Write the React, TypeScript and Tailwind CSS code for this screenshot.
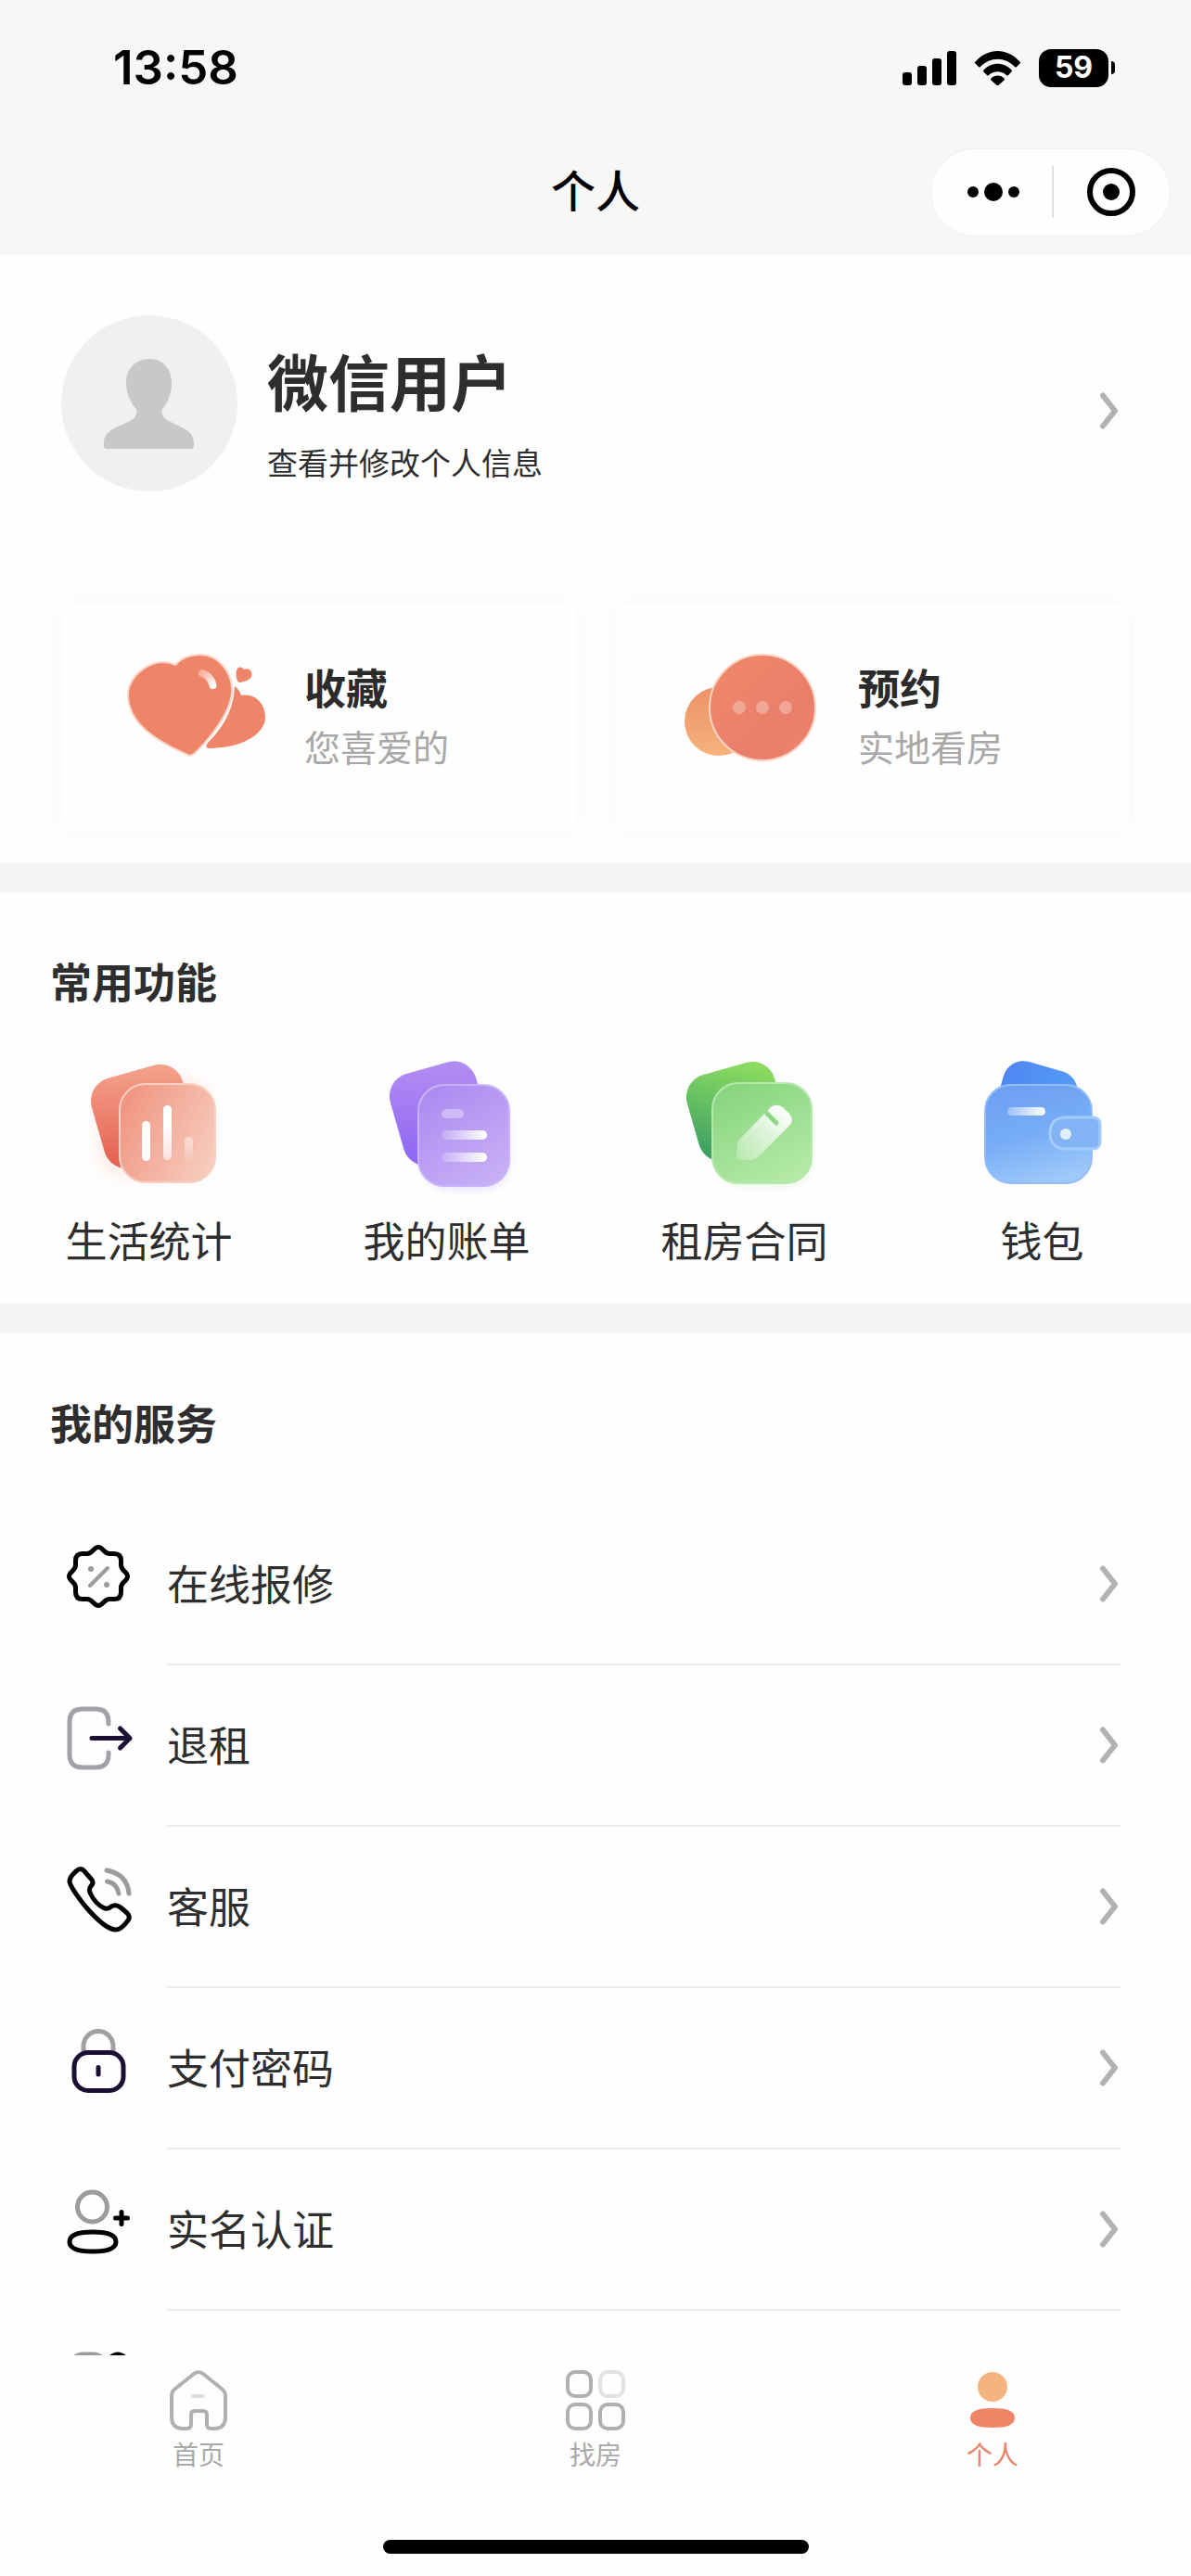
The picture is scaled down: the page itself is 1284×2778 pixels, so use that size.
import type { ReactNode } from 'react'

function Chevron() {
  return (
    <svg viewBox="0 0 22 40" className="h-10 w-[22px] shrink-0" fill="none" stroke="#b2b2b2"
      strokeWidth="6" strokeLinecap="round" strokeLinejoin="round" aria-hidden="true">
      <path d="M3 3.500L16 20L3 36.500" />
    </svg>
  )
}

function StatusBar() {
  return (
    <div className="flex h-[146px] items-center justify-between pl-[122px] pr-[82px] text-black">
      <span className="text-[51px] leading-[60px] font-semibold">13:58</span>
      <div className="flex items-center gap-[19px]">
        <svg viewBox="0 0 58 38" className="h-[38px] w-[58px]" aria-hidden="true">
          <rect x="0" y="24" width="10" height="14" rx="3" />
          <rect x="16" y="17" width="10" height="21" rx="3" />
          <rect x="32" y="9" width="10" height="29" rx="3" />
          <rect x="48" y="1" width="10" height="37" rx="3" />
        </svg>
        <svg viewBox="0 0 51 38" className="h-[38px] w-[51px]" aria-hidden="true">
          <path d="M1.500 12.500C15 -3 36 -3 49.500 12.500Q50.500 13.500 49.500 14.500L46 18Q45 19 44 18C33.500 7 17.500 7 7 18Q6 19 5 18L1.500 14.500Q.5 13.500 1.500 12.500Z" />
          <path d="M10.500 21.500C18.500 12.500 32.500 12.500 40.500 21.500Q41.500 22.500 40.500 23.500L37 27Q36 28 35 27C29.500 22 21.500 22 16 27Q15 28 14 27L10.500 23.500Q9.500 22.500 10.500 21.500Z" />
          <path d="M18.500 30.500C22 26.500 29 26.500 32.500 30.500Q33.500 31.500 32.500 32.500L26.500 38Q25.500 39 24.500 38L18.500 32.500Q17.500 31.500 18.500 30.500Z" />
        </svg>
        <div className="flex items-center gap-[3px]">
          <span className="flex h-[41px] w-[75px] items-center justify-center rounded-[13px] bg-black text-[32px] leading-[40px] font-bold text-white">
            59
          </span>
          <span className="h-[14px] w-1 rounded-r-full bg-black" />
        </div>
      </div>
    </div>
  )
}

function NavBar() {
  return (
    <div className="grid h-[122px] grid-cols-3 items-center">
      <h1 className="col-start-2 text-center text-[48px] leading-[64px] font-medium text-black">个人</h1>
      <div className="mr-[22px] flex h-[95px] w-[259px] items-center justify-self-end rounded-full border border-[#f0f0f0] bg-[#fefefe]">
        <button type="button" aria-label="更多" className="flex h-full flex-1 items-center justify-center pl-1">
          <svg viewBox="0 0 58 22" className="h-[22px] w-[58px]" aria-hidden="true">
            <circle cx="7" cy="11" r="6" />
            <circle cx="29" cy="11" r="10" />
            <circle cx="51" cy="11" r="6" />
          </svg>
        </button>
        <span className="h-14 w-0.5 bg-[#dedede]" />
        <button type="button" aria-label="关闭" className="flex h-full flex-1 items-center justify-center">
          <svg viewBox="0 0 52 52" className="h-[52px] w-[52px]" aria-hidden="true">
            <circle cx="26" cy="26" r="23" fill="none" stroke="#000" strokeWidth="6" />
            <circle cx="26" cy="26" r="9" />
          </svg>
        </button>
      </div>
    </div>
  )
}

function HeartIcon() {
  return (
    <svg viewBox="0 0 160 130" className="h-[130px] w-40 shrink-0" aria-hidden="true">
      <defs>
        <linearGradient id="shine" x1="0" y1="0" x2="1" y2="1">
          <stop offset="0" stopColor="#fbd3c4" stopOpacity=".6" />
          <stop offset="1" stopColor="#fff" />
        </linearGradient>
      </defs>
      <path d="M121 40Q126 43 128 50C142 47 154 58 154 74C153 94 125 107 94 107Q88 107 92 101C108 85 120 66 121 40Z" fill="#ee8468" />
      <path d="M57 17C48 13 38 13 28 18C13 26 5 39 6 52C8 80 34 98 70 114Q74 116 77 113C90 101 117 70 118 46C119 26 104 6 84 6C72 6 63 10 57 17Z"
        fill="#ee8468" stroke="#fbd5c6" strokeWidth="2" />
      <path d="M131 22C135 20 140 23 139.500 28C139 33 132 35 127 36Q124 36 123.500 33C122 27 122 21 126 19.500Q130 19 131 22Z" fill="#ee8468" />
      <path d="M86 26Q95 29 97.500 39" fill="none" stroke="url(#shine)" strokeWidth="8" strokeLinecap="round" />
    </svg>
  )
}

function ChatIcon() {
  return (
    <svg viewBox="0 0 160 130" className="h-[130px] w-40 shrink-0" aria-hidden="true">
      <defs>
        <linearGradient id="chatBack" x1="0" y1="0" x2="0" y2="1">
          <stop offset="0" stopColor="#ec9266" />
          <stop offset="1" stopColor="#f6b27c" />
        </linearGradient>
        <linearGradient id="chatFront" x1="0" y1="0" x2="1" y2="1">
          <stop offset="0" stopColor="#ef8969" />
          <stop offset=".7" stopColor="#e97e6b" />
          <stop offset="1" stopColor="#f08469" />
        </linearGradient>
      </defs>
      <circle cx="46" cy="78" r="37" fill="url(#chatBack)" />
      <circle cx="93" cy="63" r="57" fill="url(#chatFront)" stroke="#fbd5c6" strokeWidth="2" />
      <g fill="#fff" fillOpacity=".3">
        <circle cx="68" cy="63" r="7" />
        <circle cx="93" cy="63" r="7" />
        <circle cx="118" cy="63" r="7" />
      </g>
    </svg>
  )
}

function StatsIcon() {
  return (
    <svg viewBox="0 0 154 154" className="h-[154px] w-[154px]" aria-hidden="true">
      <defs>
        <linearGradient id="statsBack" x1=".6" y1="0" x2=".3" y2="1">
          <stop offset="0" stopColor="#f3a08a" />
          <stop offset="1" stopColor="#e5604f" />
        </linearGradient>
        <linearGradient id="statsFront" x1="0" y1=".2" x2="1" y2=".7">
          <stop offset="0" stopColor="#f09480" />
          <stop offset="1" stopColor="#f7cbbd" />
        </linearGradient>
        <linearGradient id="statsBar" x1="0" y1="0" x2="0" y2="1">
          <stop offset=".4" stopColor="#fff" />
          <stop offset="1" stopColor="#fff" stopOpacity=".6" />
        </linearGradient>
        <linearGradient id="statsFade" x1="0" y1="0" x2="0" y2="1">
          <stop offset="0" stopColor="#fff" stopOpacity=".5" />
          <stop offset="1" stopColor="#fff" stopOpacity=".1" />
        </linearGradient>
        <filter id="statsGlow" x="-30%" y="-30%" width="160%" height="160%">
          <feGaussianBlur stdDeviation="8" />
        </filter>
      </defs>
      <rect x="20" y="26" width="124" height="108" rx="30" fill="#fbded6" opacity=".5" filter="url(#statsGlow)" />
      <rect x="8" y="34" width="102" height="100" rx="25" transform="rotate(-16 8 34)" fill="url(#statsBack)" />
      <rect x="45" y="33" width="103" height="106" rx="28" fill="url(#statsFront)" stroke="#f9cfc3" strokeWidth="2" />
      <rect x="69" y="73" width="9" height="43" rx="4.500" fill="#fff" />
      <rect x="92" y="56" width="9" height="59" rx="4.500" fill="url(#statsBar)" />
      <rect x="115" y="90" width="9" height="26" rx="4.500" fill="url(#statsFade)" />
    </svg>
  )
}

function BillIcon() {
  return (
    <svg viewBox="0 0 154 154" className="h-[154px] w-[154px]" aria-hidden="true">
      <defs>
        <linearGradient id="billBack" x1=".6" y1="0" x2=".3" y2="1">
          <stop offset="0" stopColor="#b18cf2" />
          <stop offset="1" stopColor="#8f66f3" />
        </linearGradient>
        <linearGradient id="billFront" x1=".2" y1="0" x2=".8" y2="1">
          <stop offset="0" stopColor="#ac8bf1" />
          <stop offset="1" stopColor="#c8b0f6" />
        </linearGradient>
        <linearGradient id="billLine" x1="0" y1="0" x2="1" y2="0">
          <stop offset="0" stopColor="#fff" stopOpacity=".15" />
          <stop offset="1" stopColor="#fff" />
        </linearGradient>
        <filter id="billGlow" x="-30%" y="-30%" width="160%" height="160%">
          <feGaussianBlur stdDeviation="5" />
        </filter>
      </defs>
      <rect x="50" y="46" width="94" height="100" rx="28" fill="#c8b0f6" opacity=".4" filter="url(#billGlow)" />
      <rect x="9" y="29" width="96" height="102" rx="25" transform="rotate(-16 9 29)" fill="url(#billBack)" />
      <rect x="46" y="34" width="98" height="109" rx="28" fill="url(#billFront)" stroke="#c9b3fb" strokeWidth="2" />
      <rect x="71" y="60" width="24" height="10" rx="5" fill="#fff" fillOpacity=".35" />
      <rect x="71" y="83" width="49" height="10" rx="5" fill="url(#billLine)" />
      <rect x="71" y="107" width="49" height="10" rx="5" fill="url(#billLine)" />
    </svg>
  )
}

function ContractIcon() {
  return (
    <svg viewBox="0 0 154 154" className="h-[154px] w-[154px]" aria-hidden="true">
      <defs>
        <linearGradient id="dealBack" x1=".9" y1="0" x2=".3" y2="1">
          <stop offset="0" stopColor="#93e05f" />
          <stop offset=".5" stopColor="#68c263" />
          <stop offset="1" stopColor="#3da062" />
        </linearGradient>
        <linearGradient id="dealFront" x1=".2" y1="0" x2=".7" y2="1">
          <stop offset="0" stopColor="#88d47f" />
          <stop offset="1" stopColor="#b4eaa6" />
        </linearGradient>
        <linearGradient id="dealPen" x1=".8" y1="0" x2=".1" y2="1">
          <stop offset="0" stopColor="#fff" />
          <stop offset="1" stopColor="#fff" stopOpacity=".25" />
        </linearGradient>
        <filter id="dealGlow" x="-30%" y="-30%" width="160%" height="160%">
          <feGaussianBlur stdDeviation="5" />
        </filter>
      </defs>
      <rect x="48" y="44" width="100" height="98" rx="28" fill="#b4eaa6" opacity=".4" filter="url(#dealGlow)" />
      <rect x="8" y="30" width="98" height="96" rx="25" transform="rotate(-16 8 30)" fill="url(#dealBack)" />
      <rect x="42" y="32" width="107" height="108" rx="28" fill="url(#dealFront)" stroke="#b6e8ae" strokeWidth="2" />
      <path d="M69 98Q69 95 71 93L105 58Q112 53 119 59L125 65Q130 71 126 77L93 110Q90 114 84 115H74Q68 115 68 109Z" fill="url(#dealPen)" />
      <path d="M101 65L111 75" stroke="#8fd786" strokeWidth="5" strokeLinecap="round" />
    </svg>
  )
}

function WalletIcon() {
  return (
    <svg viewBox="0 0 154 154" className="h-[154px] w-[154px]" aria-hidden="true">
      <defs>
        <linearGradient id="payBack" x1="0" y1="0" x2="1" y2="0">
          <stop offset="0" stopColor="#4f87f2" />
          <stop offset="1" stopColor="#539df8" />
        </linearGradient>
        <linearGradient id="payFront" x1=".3" y1="0" x2=".6" y2="1">
          <stop offset="0" stopColor="#6da0f3" />
          <stop offset=".5" stopColor="#77adf6" />
          <stop offset="1" stopColor="#9fc9fa" />
        </linearGradient>
        <linearGradient id="payLine" x1="0" y1="0" x2="1" y2="0">
          <stop offset="0" stopColor="#fff" stopOpacity=".3" />
          <stop offset="1" stopColor="#fff" />
        </linearGradient>
      </defs>
      <rect x="41" y="3" width="82" height="80" rx="22" transform="rotate(16 41 3)" fill="url(#payBack)" />
      <rect x="15" y="34" width="115" height="106" rx="28" fill="url(#payFront)" stroke="#93bdfa" strokeWidth="2" />
      <rect x="39" y="58" width="41" height="9" rx="4.500" fill="url(#payLine)" />
      <path d="M101 69H131Q139 69 139 77V95Q139 103 131 103H101Q85 102 85 86Q85 70 101 69Z" fill="#82b4f5" stroke="#a5cbfb" strokeWidth="3" />
      <circle cx="102" cy="87" r="6" fill="#e3effd" />
    </svg>
  )
}

function RowIcon({ children }: { children: ReactNode }) {
  return (
    <svg viewBox="0 0 76 76" className="mb-[18px] h-[76px] w-[76px] shrink-0" fill="none" stroke="#000"
      strokeWidth="5" strokeLinecap="round" strokeLinejoin="round" aria-hidden="true">
      {children}
    </svg>
  )
}

const shortcuts = [
  { label: '生活统计', icon: <StatsIcon /> },
  { label: '我的账单', icon: <BillIcon /> },
  { label: '租房合同', icon: <ContractIcon /> },
  { label: '钱包', icon: <WalletIcon /> },
]

const services = [
  {
    label: '在线报修',
    icon: (
      <RowIcon>
        <path d="M38 6.500C43 6.500 44 13.500 50 13.500H55Q62.500 13.500 62.500 21V26C62.500 32 69.500 33 69.500 38C69.500 43 62.500 44 62.500 50V55Q62.500 62.500 55 62.500H50C44 62.500 43 69.500 38 69.500C33 69.500 32 62.500 26 62.500H21Q13.500 62.500 13.500 55V50C13.500 44 6.500 43 6.500 38C6.500 33 13.500 32 13.500 26V21Q13.500 13.500 21 13.500H26C32 13.500 33 6.500 38 6.500Z" />
        <path d="M29 48L48 29" stroke="#9b9b9b" strokeWidth="4" />
        <circle cx="30" cy="30" r="3" fill="#9b9b9b" stroke="none" />
        <circle cx="47" cy="47" r="3" fill="#9b9b9b" stroke="none" />
      </RowIcon>
    ),
  },
  {
    label: '退租',
    icon: (
      <RowIcon>
        <path d="M49 23V21Q49 7 35 7H21Q7 7 7 21V56Q7 70 21 70H35Q49 70 49 56V54" stroke="#a3a1a8" />
        <path d="M31 38.500H72M61.500 28L72 38.500L61.500 49" stroke="#1b1033" />
      </RowIcon>
    ),
  },
  {
    label: '客服',
    icon: (
      <RowIcon>
        <path d="M14 8Q19 3 23 8L30 16Q34 20 30 24Q27 28 30 33Q35 43 43 47Q48 50 52 46Q57 43 62 47L69 53Q73 57 70 61Q62 72 56 71Q45 70 25 47Q8 26 7 19Q7 14 14 8Z" />
        <path d="M47 7Q69 11 71 32M47.500 19Q58 21 60 32" stroke="#9b9b9b" />
      </RowIcon>
    ),
  },
  {
    label: '支付密码',
    icon: (
      <RowIcon>
        <path d="M22 28V22.500A16 16 0 0 1 54 22.500V28" stroke="#a0a0a0" strokeLinecap="butt" />
        <rect x="12" y="29.500" width="53" height="41" rx="15" stroke="#1b1033" />
        <path d="M38 45.500V53" stroke="#1b1033" />
      </RowIcon>
    ),
  },
  {
    label: '实名认证',
    icon: (
      <RowIcon>
        <circle cx="31.500" cy="22" r="16" stroke="#9b9b9b" />
        <path d="M32 49C48 49 57 52 57 59.500C57 67 48 70 32 70C16 70 7 67 7 59.500C7 52 16 49 32 49Z" />
        <path d="M56.500 34H69.500M63 27.500V40.500" />
      </RowIcon>
    ),
  },
  {
    label: '',
    icon: (
      <RowIcon>
        <rect x="9" y="7" width="36" height="62" rx="12" stroke="#9b9b9b" />
        <circle cx="59" cy="17" r="10" />
      </RowIcon>
    ),
  },
]

const tabs = [
  {
    label: '首页',
    active: false,
    icon: (
      <g fill="none" stroke="#b0b0b0" strokeWidth="4" strokeLinecap="round">
        <path d="M29 6Q34 2.500 39 6L59 22Q63 25 63 30V52Q63 65 51 65H47Q43 65 43 60V50Q43 46 39 46H30Q26 46 26 50V60Q26 65 22 65H17Q5 65 5 52V30Q5 25 9 22Z" />
        <path d="M28 30H39" stroke="#dcdcdc" />
      </g>
    ),
  },
  {
    label: '找房',
    active: false,
    icon: (
      <g fill="none" stroke="#b0b0b0" strokeWidth="4">
        <rect x="4" y="4" width="25" height="26" rx="8" />
        <rect x="39" y="4" width="25" height="26" rx="8" stroke="#e2e2e2" />
        <rect x="4" y="39" width="25" height="26" rx="8" />
        <rect x="39" y="39" width="25" height="26" rx="8" />
      </g>
    ),
  },
  {
    label: '个人',
    active: true,
    icon: (
      <g>
        <circle cx="34" cy="20" r="16" fill="#f4b47f" />
        <path d="M34 43C50 43 58 46 58 53.500C58 61 50 64 34 64C18 64 10 61 10 53.500C10 46 18 43 34 43Z" fill="#ef8467" />
      </g>
    ),
  },
]

function EntryCard({ title, hint, icon }: { title: string; hint: string; icon: ReactNode }) {
  return (
    <button type="button"
      className="flex h-[244px] items-start gap-9 rounded-lg bg-[#fefefe] pt-12 pl-[66px] text-left shadow-[0_0_30px_rgba(120,40,40,0.03)]">
      {icon}
      <span className="flex flex-col pt-3 leading-[63px]">
        <span className="text-[45px] font-bold text-[#2b2b2b]">{title}</span>
        <span className="text-[39px] text-[#a8a8a8]">{hint}</span>
      </span>
    </button>
  )
}

export default function App() {
  return (
    <div className="flex h-screen flex-col bg-[#fefefe] font-[Inter,'Noto_Sans_CJK_SC',sans-serif] text-[#2e2e2e]">
      <header className="bg-[#f7f7f7] pb-[7px]">
        <StatusBar />
        <NavBar />
      </header>

      <main className="min-h-0 flex-1 overflow-hidden">
        <section className="px-[66px] pt-[65px] pb-[34px]">
          <button type="button" className="flex w-full items-center gap-8 pr-[10px] text-left">
            <svg viewBox="0 0 190 190" className="h-[190px] w-[190px] rounded-full bg-[#f0f0f0]" aria-hidden="true">
              <path d="M95 47C110 47 119 58 119 73C119 87 113 97 109 101Q107 108 113 112C122 119 143 122 143 137V141Q143 144 140 144H49Q46 144 46 141V137C46 122 68 119 77 112Q83 108 81 101C77 97 70 87 70 73C70 58 80 47 95 47Z" fill="#c8c8c8" />
            </svg>
            <span className="flex flex-1 flex-col gap-6 pt-[26px]">
              <span className="text-[66px] leading-[80px] font-bold">微信用户</span>
              <span className="text-[33px] leading-[44px]">查看并修改个人信息</span>
            </span>
            <span className="pt-4">
              <Chevron />
            </span>
          </button>

          <div className="mt-[122px] grid grid-cols-2 gap-[42px]">
            <EntryCard title="收藏" hint="您喜爱的" icon={<HeartIcon />} />
            <EntryCard title="预约" hint="实地看房" icon={<ChatIcon />} />
          </div>
        </section>

        <section className="border-t-[32px] border-[#f5f5f5] pt-[67px] pb-[34px]">
          <h2 className="pl-[54px] text-[45px] leading-[64px] font-bold">常用功能</h2>
          <div className="mt-[43px] grid grid-cols-4">
            {shortcuts.map((item) => (
              <button key={item.label} type="button" className="flex flex-col items-center gap-[18px]">
                {item.icon}
                <span className="text-[45px] leading-[64px]">{item.label}</span>
              </button>
            ))}
          </div>
        </section>

        <section className="border-t-[32px] border-[#f5f5f5] pt-[67px]">
          <h2 className="pl-[54px] text-[45px] leading-[64px] font-bold">我的服务</h2>
          <ul className="mt-[53px]">
            {services.map((item) => (
              <li key={item.label}>
                <button type="button" className="flex w-full items-center gap-9 pr-[76px] pl-[68px] text-left">
                  {item.icon}
                  <span className="flex h-[174px] flex-1 items-center justify-between border-b-2 border-[#ececec]">
                    <span className="pt-1 text-[45px] leading-[64px]">{item.label}</span>
                    <Chevron />
                  </span>
                </button>
              </li>
            ))}
          </ul>
        </section>
      </main>

      <nav className="bg-[#fefefe] pt-[14px] pb-6">
        <div className="grid grid-cols-3">
          {tabs.map((tab) => (
            <a key={tab.label} href="#" aria-current={tab.active ? 'page' : undefined}
              className={`flex flex-col items-center gap-2 ${tab.active ? 'text-[#e8806a]' : 'text-[#a9a9a9]'}`}>
              <svg viewBox="0 0 68 68" className="h-[68px] w-[68px]" aria-hidden="true">{tab.icon}</svg>
              <span className="text-[28px] leading-[36px]">{tab.label}</span>
            </a>
          ))}
        </div>
        <div className="mx-auto mt-[73px] h-[15px] w-[459px] rounded-full bg-black" />
      </nav>
    </div>
  )
}
